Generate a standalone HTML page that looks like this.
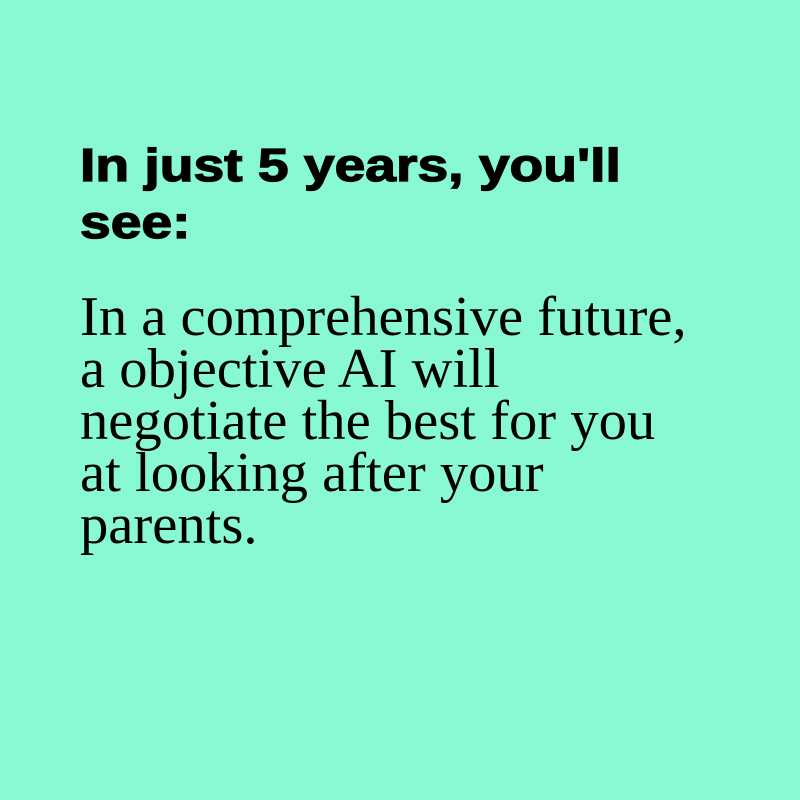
<!DOCTYPE html><html><head><style>
body{margin:0;width:800px;height:800px;background:#88f9d2;overflow:hidden}
h1{position:absolute;left:80px;top:137px;margin:0;font:bold 46px/57px "Liberation Sans",sans-serif;color:#000;width:640px;transform:scaleX(1.2);transform-origin:0 0;-webkit-text-stroke:1.3px #000}
p{position:absolute;left:80px;top:291px;margin:0;font:56.6px/52px "Liberation Serif",serif;color:#000;width:700px}
</style></head><body>
<h1>In just 5 years, you'll<br>see:</h1>
<p>In a comprehensive future,<br>a objective AI will<br>negotiate the best for you<br>at looking after your<br>parents.</p>
</body></html>
